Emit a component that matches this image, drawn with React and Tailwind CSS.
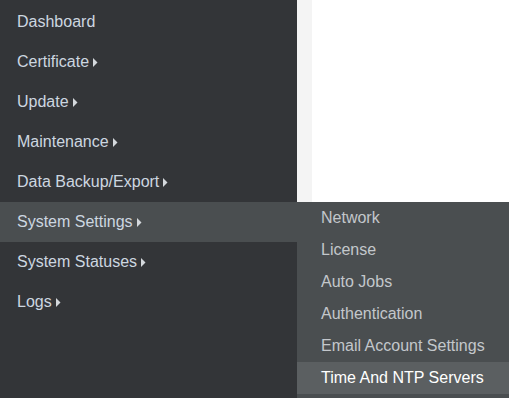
import React from 'react';

const mainItems = [
  { label: 'Dashboard', sub: false },
  { label: 'Certificate', sub: true },
  { label: 'Update', sub: true },
  { label: 'Maintenance', sub: true },
  { label: 'Data Backup/Export', sub: true },
  { label: 'System Settings', sub: true, active: true },
  { label: 'System Statuses', sub: true },
  { label: 'Logs', sub: true },
];

const subItems = [
  'Network',
  'License',
  'Auto Jobs',
  'Authentication',
  'Email Account Settings',
  'Time And NTP Servers',
];

const Caret = () => (
  <svg width="5" height="9" viewBox="0 0 5 9" className="ml-[4px] mt-[1px]">
    <path d="M0 0 L4.5 4.5 L0 9 Z" fill="#d4d8dc" />
  </svg>
);

const App = () => {
  return (
    <div className="flex h-[398px] w-[520px] overflow-hidden bg-white font-['Liberation_Sans',Arial,sans-serif] text-[16px]">
      {/* Sidebar */}
      <nav className="relative w-[297px] shrink-0 bg-[#333538] pt-[2px]">
        {mainItems.map((item) => (
          <div key={item.label} className="relative">
            <div
              className={`flex h-[40px] items-center pl-[17px] text-[#cdd7e0] ${
                item.active ? 'bg-[#4a4e50]' : ''
              }`}
            >
              {item.label}
              {item.sub && <Caret />}
            </div>

            {/* Flyout submenu */}
            {item.active && (
              <div className="absolute left-[297px] top-0 z-10 w-[212px] bg-[#4a4e50] pb-[4px]">
                {subItems.map((s, i) => (
                  <div
                    key={s}
                    className={`flex h-[32px] items-center pl-[24px] ${
                      i === subItems.length - 1
                        ? 'bg-[#5b5f61] text-white'
                        : 'text-[#c3c7cb]'
                    }`}
                  >
                    {s}
                  </div>
                ))}
              </div>
            )}
          </div>
        ))}
      </nav>

      {/* Content */}
      <div className="w-[15px] shrink-0 bg-[#f4f4f4]" />
      <main className="flex-1 bg-white" />
    </div>
  );
};

export default App;
